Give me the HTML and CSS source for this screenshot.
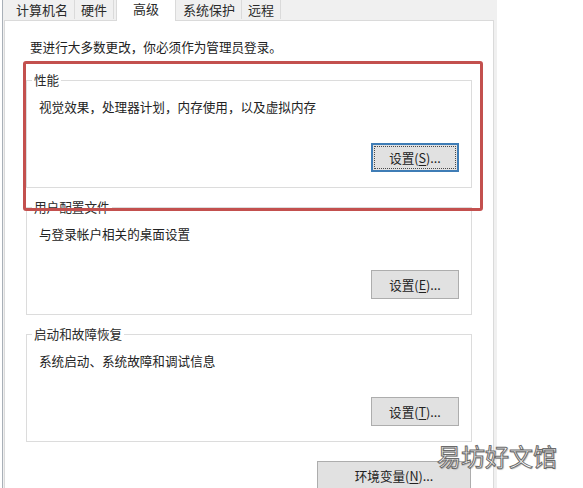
FILE: index.html
```html
<!DOCTYPE html>
<html lang="zh-CN">

<head>
    <meta charset="UTF-8">
    <meta name="viewport" content="width=device-width, initial-scale=1.0">
    <title>系统属性 - 高级</title>
    <link rel="stylesheet" href="styles.css">
</head>

<body>
    <div class="window">
        <div class="tabs">
            <span class="tab">计算机名</span>
            <span class="tab">硬件</span>
            <span class="tab tab--active">高级</span>
            <span class="tab tab--after">系统保护</span>
            <span class="tab">远程</span>
        </div>

        <div class="panel">
            <p class="intro">要进行大多数更改，你必须作为管理员登录。</p>

            <fieldset class="group">
                <legend>性能</legend>
                <p class="desc">视觉效果，处理器计划，内存使用，以及虚拟内存</p>
                <div class="actions">
                    <button class="button button--focus">设置(<u>S</u>)...</button>
                </div>
            </fieldset>

            <fieldset class="group">
                <legend>用户配置文件</legend>
                <p class="desc">与登录帐户相关的桌面设置</p>
                <div class="actions">
                    <button class="button">设置(<u>E</u>)...</button>
                </div>
            </fieldset>

            <fieldset class="group">
                <legend>启动和故障恢复</legend>
                <p class="desc">系统启动、系统故障和调试信息</p>
                <div class="actions">
                    <button class="button">设置(<u>T</u>)...</button>
                </div>
            </fieldset>

            <div class="env">
                <button class="button button--wide">环境变量(<u>N</u>)...</button>
            </div>
        </div>

        <!-- annotation drawn over the screenshot -->
        <div class="highlight"></div>
    </div>

    <div class="watermark">易坊好文馆</div>
</body>

</html>
```

FILE: styles.css
```css
body {
    margin: 0;
    width: 583px;
    height: 488px;
    overflow: hidden;
    background: #fff;
    font-family: "Noto Sans CJK SC", "Noto Sans", sans-serif;
    color: #222;
    position: relative;
}

.window {
    position: relative;
    display: flex;
    flex-direction: column;
    margin-left: 2px;
    width: 494px;
    height: 488px;
    border-left: 1px solid #a9b0b8;
    background: #f0f0f0;
}

/* tab strip */
.tabs {
    display: flex;
    align-items: flex-start;
    height: 20px;
    flex-shrink: 0;
    padding-left: 7px;
}

.tab {
    font-size: 13px;
    line-height: 19px;
    height: 19px;
    padding: 0 6px;
    border-right: 1px solid #dadada;
    color: #2a2a2a;
}

.tab--active {
    position: relative;
    z-index: 1;
    margin-left: 2px;
    padding: 2px 16px 5px;
    line-height: 14px;
    height: 14px;
    background: #fff;
    border-left: 1px solid #dadada;
}

.tab--after {
    margin-left: 1px;
}

/* page body */
.panel {
    flex: 1;
    margin: 0 3px 0 1px;
    overflow: hidden;
    background: #fff;
    border: 1px solid #dadada;
    border-bottom: none;
    padding: 17px 21px 0;
}

.intro {
    margin: 0 0 15px 4px;
    font-size: 12.6px;
    line-height: 18px;
}

.group {
    margin: 0 0 10px;
    padding: 0 12px 15px;
    border: 1px solid #dcdcdc;
}

.group legend {
    margin-left: -7px;
    padding: 0 2px;
    font-size: 12.6px;
    line-height: 18px;
    color: #2a2a2a;
}

.desc {
    margin: 9px 0 0;
    font-size: 12.6px;
    line-height: 18px;
}

.actions {
    display: flex;
    justify-content: flex-end;
    margin-top: 27px;
}

.button {
    width: 88px;
    height: 29px;
    padding: 0;
    font-family: inherit;
    font-size: 12.6px;
    color: #222;
    background: #e1e1e1;
    border: 1px solid #adadad;
}

.button u {
    text-decoration-thickness: 1px;
    text-underline-offset: 2px;
}

.button--focus {
    border: 2px solid #3f7db6;
    outline: 1px dotted #4a4a4a;
    outline-offset: -4px;
}

.env {
    display: flex;
    justify-content: flex-end;
    margin-top: 19px;
    padding-right: 1px;
}

.button--wide {
    width: 154px;
}

/* red annotation box */
.highlight {
    position: absolute;
    left: 20px;
    top: 61px;
    width: 454px;
    height: 144px;
    border: 3px solid #c3504e;
    border-radius: 3px;
}

.watermark {
    position: absolute;
    left: 437px;
    top: 441px;
    font-size: 24px;
    line-height: 30px;
    color: #fff;
    -webkit-text-stroke: 1px #6a6a6a;
    text-shadow: 1px 1px 1px rgba(0, 0, 0, 0.25);
}
```
